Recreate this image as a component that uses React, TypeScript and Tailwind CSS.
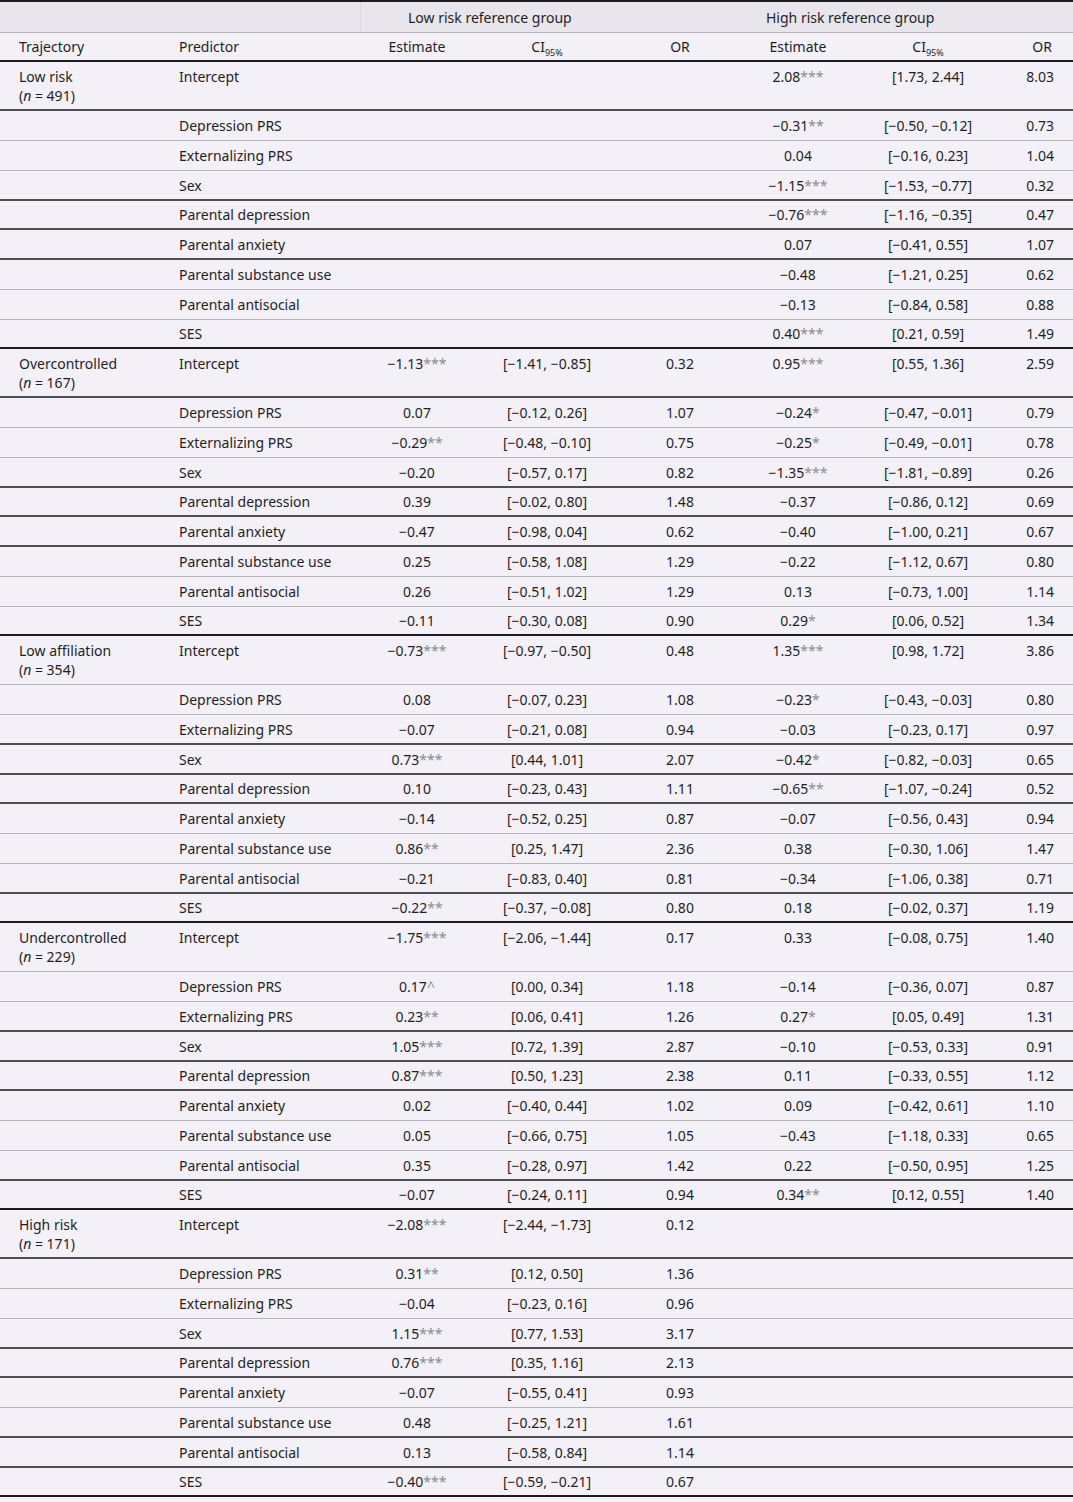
type Cell = [string, string, string, string]

type Row = {
  predictor: string
  low?: Cell
  high?: Cell
}

type Group = {
  name: string
  n: string
  lines: string
  rows: Row[]
}

const PREDICTORS = [
  'Intercept',
  'Depression PRS',
  'Externalizing PRS',
  'Sex',
  'Parental depression',
  'Parental anxiety',
  'Parental substance use',
  'Parental antisocial',
  'SES',
]

// row heights: intercept row is taller (two-line trajectory label)
const HEIGHTS = ['h-[49px]', 'h-[30px]', 'h-[30px]', 'h-[30px]', 'h-[29px]', 'h-[30px]', 'h-[30px]', 'h-[30px]', 'h-[29px]']

// [estimate, stars, CI, OR]
const build = (low: (Cell | null)[], high: (Cell | null)[]): Row[] =>
  PREDICTORS.map((p, i) => ({
    predictor: p,
    low: low[i] ?? undefined,
    high: high[i] ?? undefined,
  }))

const none = Array(9).fill(null)

const groups: Group[] = [
  {
    name: 'Low risk',
    n: '491',
    lines: 'DTTDDDTT',
    rows: build(none, [
      ['2.08', '***', '[1.73, 2.44]', '8.03'],
      ['−0.31', '**', '[−0.50, −0.12]', '0.73'],
      ['0.04', '', '[−0.16, 0.23]', '1.04'],
      ['−1.15', '***', '[−1.53, −0.77]', '0.32'],
      ['−0.76', '***', '[−1.16, −0.35]', '0.47'],
      ['0.07', '', '[−0.41, 0.55]', '1.07'],
      ['−0.48', '', '[−1.21, 0.25]', '0.62'],
      ['−0.13', '', '[−0.84, 0.58]', '0.88'],
      ['0.40', '***', '[0.21, 0.59]', '1.49'],
    ]),
  },
  {
    name: 'Overcontrolled',
    n: '167',
    lines: 'DTTDDDTT',
    rows: build(
      [
        ['−1.13', '***', '[−1.41, −0.85]', '0.32'],
        ['0.07', '', '[−0.12, 0.26]', '1.07'],
        ['−0.29', '**', '[−0.48, −0.10]', '0.75'],
        ['−0.20', '', '[−0.57, 0.17]', '0.82'],
        ['0.39', '', '[−0.02, 0.80]', '1.48'],
        ['−0.47', '', '[−0.98, 0.04]', '0.62'],
        ['0.25', '', '[−0.58, 1.08]', '1.29'],
        ['0.26', '', '[−0.51, 1.02]', '1.29'],
        ['−0.11', '', '[−0.30, 0.08]', '0.90'],
      ],
      [
        ['0.95', '***', '[0.55, 1.36]', '2.59'],
        ['−0.24', '*', '[−0.47, −0.01]', '0.79'],
        ['−0.25', '*', '[−0.49, −0.01]', '0.78'],
        ['−1.35', '***', '[−1.81, −0.89]', '0.26'],
        ['−0.37', '', '[−0.86, 0.12]', '0.69'],
        ['−0.40', '', '[−1.00, 0.21]', '0.67'],
        ['−0.22', '', '[−1.12, 0.67]', '0.80'],
        ['0.13', '', '[−0.73, 1.00]', '1.14'],
        ['0.29', '*', '[0.06, 0.52]', '1.34'],
      ]
    ),
  },
  {
    name: 'Low affiliation',
    n: '354',
    lines: 'TTDDDTTD',
    rows: build(
      [
        ['−0.73', '***', '[−0.97, −0.50]', '0.48'],
        ['0.08', '', '[−0.07, 0.23]', '1.08'],
        ['−0.07', '', '[−0.21, 0.08]', '0.94'],
        ['0.73', '***', '[0.44, 1.01]', '2.07'],
        ['0.10', '', '[−0.23, 0.43]', '1.11'],
        ['−0.14', '', '[−0.52, 0.25]', '0.87'],
        ['0.86', '**', '[0.25, 1.47]', '2.36'],
        ['−0.21', '', '[−0.83, 0.40]', '0.81'],
        ['−0.22', '**', '[−0.37, −0.08]', '0.80'],
      ],
      [
        ['1.35', '***', '[0.98, 1.72]', '3.86'],
        ['−0.23', '*', '[−0.43, −0.03]', '0.80'],
        ['−0.03', '', '[−0.23, 0.17]', '0.97'],
        ['−0.42', '*', '[−0.82, −0.03]', '0.65'],
        ['−0.65', '**', '[−1.07, −0.24]', '0.52'],
        ['−0.07', '', '[−0.56, 0.43]', '0.94'],
        ['0.38', '', '[−0.30, 1.06]', '1.47'],
        ['−0.34', '', '[−1.06, 0.38]', '0.71'],
        ['0.18', '', '[−0.02, 0.37]', '1.19'],
      ]
    ),
  },
  {
    name: 'Undercontrolled',
    n: '229',
    lines: 'TTDDDTTD',
    rows: build(
      [
        ['−1.75', '***', '[−2.06, −1.44]', '0.17'],
        ['0.17', '^', '[0.00, 0.34]', '1.18'],
        ['0.23', '**', '[0.06, 0.41]', '1.26'],
        ['1.05', '***', '[0.72, 1.39]', '2.87'],
        ['0.87', '***', '[0.50, 1.23]', '2.38'],
        ['0.02', '', '[−0.40, 0.44]', '1.02'],
        ['0.05', '', '[−0.66, 0.75]', '1.05'],
        ['0.35', '', '[−0.28, 0.97]', '1.42'],
        ['−0.07', '', '[−0.24, 0.11]', '0.94'],
      ],
      [
        ['0.33', '', '[−0.08, 0.75]', '1.40'],
        ['−0.14', '', '[−0.36, 0.07]', '0.87'],
        ['0.27', '*', '[0.05, 0.49]', '1.31'],
        ['−0.10', '', '[−0.53, 0.33]', '0.91'],
        ['0.11', '', '[−0.33, 0.55]', '1.12'],
        ['0.09', '', '[−0.42, 0.61]', '1.10'],
        ['−0.43', '', '[−1.18, 0.33]', '0.65'],
        ['0.22', '', '[−0.50, 0.95]', '1.25'],
        ['0.34', '**', '[0.12, 0.55]', '1.40'],
      ]
    ),
  },
  {
    name: 'High risk',
    n: '171',
    lines: 'DTTDDTDD',
    rows: build(
      [
        ['−2.08', '***', '[−2.44, −1.73]', '0.12'],
        ['0.31', '**', '[0.12, 0.50]', '1.36'],
        ['−0.04', '', '[−0.23, 0.16]', '0.96'],
        ['1.15', '***', '[0.77, 1.53]', '3.17'],
        ['0.76', '***', '[0.35, 1.16]', '2.13'],
        ['−0.07', '', '[−0.55, 0.41]', '0.93'],
        ['0.48', '', '[−0.25, 1.21]', '1.61'],
        ['0.13', '', '[−0.58, 0.84]', '1.14'],
        ['−0.40', '***', '[−0.59, −0.21]', '0.67'],
      ],
      none
    ),
  },
]

const GRID = 'grid grid-cols-[160px_200px_114px_146px_120px_116px_144px_73px]'

function lineClass(kind: string) {
  if (kind === 'D') return 'border-b-2 border-[#4f4f4f]'
  if (kind === 'B') return 'border-b-2 border-[#1c1c1c]'
  return 'border-b border-[#b6b6b6]'
}

function Estimate({ value, stars }: { value: string; stars: string }) {
  return (
    <span>
      {value}
      {stars && <span className="text-[#8c8c8c]">{stars}</span>}
    </span>
  )
}

function CI() {
  return (
    <span>
      CI<sub className="relative top-[4px] align-baseline text-[9px]">95%</sub>
    </span>
  )
}

export default function App() {
  return (
    <div
      className="min-h-screen w-[1073px] bg-[#f3f0f8] text-[14px] leading-[19px] text-[#1f1f1f]"
      style={{ fontFamily: '"Noto Sans", "Open Sans", sans-serif' }}
    >
      {/* header */}
      <div className="border-t-2 border-[#1c1c1c]">
        <div className={`${GRID} h-[31px] border-b border-[#b6b6b6] bg-[#e8e5ed]`}>
          <div />
          <div />
          <div className="col-span-3 flex items-center border-l border-[#dcd9e1] pl-[47px]">
            Low risk reference group
          </div>
          <div className="col-span-3 flex items-center pl-[26px]">High risk reference group</div>
        </div>
        <div className={`${GRID} h-[29px] items-center border-b-2 border-[#1c1c1c]`}>
          <div className="pl-[19px]">Trajectory</div>
          <div className="pl-[19px]">Predictor</div>
          <div className="text-center">Estimate</div>
          <div className="text-center">
            <CI />
          </div>
          <div className="text-center">OR</div>
          <div className="text-center">Estimate</div>
          <div className="text-center">
            <CI />
          </div>
          <div className="pr-[21px] text-right">OR</div>
        </div>
      </div>

      {/* body */}
      {groups.map((g) =>
        g.rows.map((r, i) => {
          const first = i === 0
          const kind = i === g.rows.length - 1 ? 'B' : g.lines[i]
          return (
            <div
              key={g.name + r.predictor}
              className={`${GRID} ${lineClass(kind)} ${HEIGHTS[i]} ${
                first ? 'items-start pt-[5px]' : 'items-center'
              }`}
            >
              <div className="pl-[19px]">
                {first && (
                  <>
                    <div>{g.name}</div>
                    <div>
                      (<i>n</i> = {g.n})
                    </div>
                  </>
                )}
              </div>
              <div className="pl-[19px]">{r.predictor}</div>
              <div className="text-center">
                {r.low && <Estimate value={r.low[0]} stars={r.low[1]} />}
              </div>
              <div className="text-center">{r.low?.[2]}</div>
              <div className="text-center">{r.low?.[3]}</div>
              <div className="text-center">
                {r.high && <Estimate value={r.high[0]} stars={r.high[1]} />}
              </div>
              <div className="text-center">{r.high?.[2]}</div>
              <div className="pr-[19px] text-right">{r.high?.[3]}</div>
            </div>
          )
        })
      )}
    </div>
  )
}
